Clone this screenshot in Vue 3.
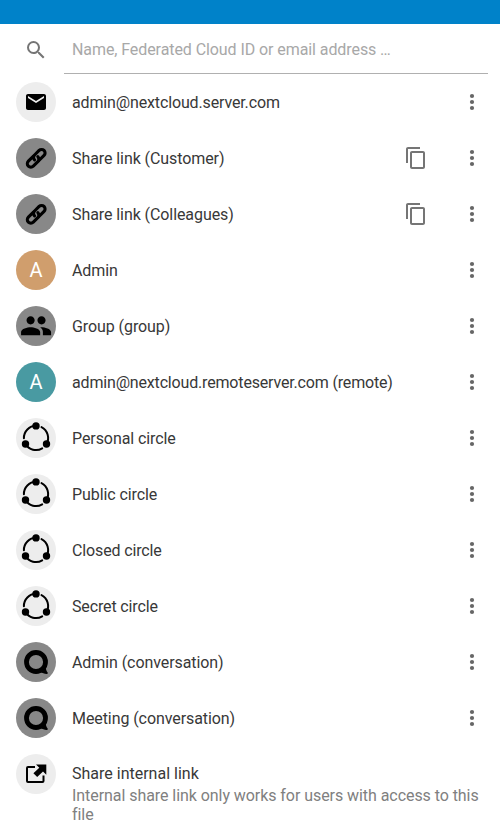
<script setup>
const rows = [
  { name: 'admin@nextcloud.server.com', icon: 'mail', tone: 'light', fit: 'tight' },
  { name: 'Share link (Customer)', icon: 'link', tone: 'grey', copy: true },
  { name: 'Share link (Colleagues)', icon: 'link', tone: 'grey', copy: true },
  { name: 'Admin', icon: 'letter', tone: 'tan' },
  { name: 'Group (group)', icon: 'group', tone: 'grey' },
  { name: 'admin@nextcloud.remoteserver.com (remote)', icon: 'letter', tone: 'teal', fit: 'tighter' },
  { name: 'Personal circle', icon: 'circle', tone: 'light' },
  { name: 'Public circle', icon: 'circle', tone: 'light' },
  { name: 'Closed circle', icon: 'circle', tone: 'light', fit: 'tight' },
  { name: 'Secret circle', icon: 'circle', tone: 'light', fit: 'tight' },
  { name: 'Admin (conversation)', icon: 'talk', tone: 'grey' },
  { name: 'Meeting (conversation)', icon: 'talk', tone: 'grey' },
  { name: 'Share internal link', icon: 'open', tone: 'light', fit: 'normal', note: 'Internal share link only works for users with access to this file' },
]
</script>

<template>
  <main class="screen">
    <div class="status-bar"></div>
    <div class="search">
      <svg class="search-icon" viewBox="0 0 24 24">
        <path d="M15.5 14h-.79l-.28-.27A6.47 6.47 0 0 0 16 9.500 6.500 6.500 0 1 0 9.500 16c1.610 0 3.090-.590 4.230-1.570l.270.280v.790l5 4.990L20.490 19l-4.990-5zm-6 0C7.010 14 5 11.990 5 9.500S7.010 5 9.500 5 14 7.010 14 9.500 11.990 14 9.500 14z" />
      </svg>
      <div class="field">Name, Federated Cloud ID or email address …</div>
    </div>
    <ul class="list">
      <li v-for="row in rows" :key="row.name" class="row" :class="{ tall: row.note }">
        <span class="avatar" :class="row.tone">
          <span v-if="row.icon === 'letter'">A</span>
          <svg v-else viewBox="0 0 40 40">
            <path v-if="row.icon === 'mail'" transform="translate(8 8)" d="M20 4H4c-1.100 0-1.990.900-1.990 2L2 18c0 1.100.900 2 2 2h16c1.100 0 2-.900 2-2V6c0-1.100-.900-2-2-2zm0 4l-8 5-8-5V6l8 5 8-5v2z" />
            <g v-else-if="row.icon === 'link'" class="stroke chain" transform="translate(20.200 20.300) rotate(-45)">
              <path d="M0 -3.500H-7.600A3.500 3.500 0 0 0 -7.600 3.500H-1.200A3.500 3.500 0 0 0 2.300 0" />
              <path d="M0 3.500H7.600A3.500 3.500 0 0 0 7.600 -3.500H1.200A3.500 3.500 0 0 0 -2.300 0" />
            </g>
            <path v-else-if="row.icon === 'group'" transform="translate(3.700 3.400) scale(1.364)" d="M16 11c1.660 0 2.990-1.340 2.990-3S17.660 5 16 5s-3 1.340-3 3 1.340 3 3 3zm-8 0c1.660 0 2.990-1.340 2.990-3S9.660 5 8 5 5 6.340 5 8s1.340 3 3 3zm0 2c-2.330 0-7 1.170-7 3.500V19h14v-2.500C15 14.170 10.330 13 8 13zm8 0c-.290 0-.620.020-.970.050 1.160.840 1.970 1.970 1.970 3.450V19h6v-2.500c0-2.330-4.670-3.500-7-3.500z" />
            <template v-else-if="row.icon === 'circle'">
              <g class="stroke ring">
                <path d="M7.900 20.200A12.200 12.200 0 0 1 20 7.800" />
                <path d="M25.500 9.100A12.200 12.200 0 0 1 30.500 26" />
                <path d="M9.500 26A12.200 12.200 0 0 0 26.200 30.400" />
              </g>
              <circle cx="20" cy="7.900" r="3.700" />
              <circle cx="9.500" cy="26" r="3.700" />
              <circle cx="30.500" cy="26" r="3.700" />
            </template>
            <template v-else-if="row.icon === 'talk'">
              <circle class="stroke bubble" cx="20" cy="20" r="9.500" />
              <path d="M29.500 24.500c.300 2.500.900 4.500 2 5.700.700.900.200 1.800-.900 1.700-2.200-.100-4.400-.800-6.100-1.900z" />
            </template>
            <template v-else>
              <path class="stroke box" d="M19 13H12Q11 13 11 14V27Q11 28 12 28H26.500Q27.500 28 27.500 27V21.500" />
              <path d="M20 10.500H30.300V20.800L27 17.600 21.200 23.100 17.400 19.300 23.300 13.700Z" />
            </template>
          </svg>
        </span>
        <div class="text">
          <div class="name" :class="row.fit">{{ row.name }}</div>
          <div v-if="row.note" class="note">{{ row.note }}</div>
        </div>
        <svg v-if="row.copy" class="copy" viewBox="0 0 24 24">
          <path d="M16 1H4c-1.100 0-2 .900-2 2v14h2V3h12V1zm3 4H8c-1.100 0-2 .900-2 2v14c0 1.100.900 2 2 2h11c1.100 0 2-.900 2-2V7c0-1.100-.900-2-2-2zm0 16H8V7h11v14z" />
        </svg>
        <svg v-if="!row.note" class="more" viewBox="0 0 24 24">
          <circle cx="12" cy="6" r="2.100" />
          <circle cx="12" cy="12" r="2.100" />
          <circle cx="12" cy="18" r="2.100" />
        </svg>
      </li>
    </ul>
  </main>
</template>

<style>
body {
  background: #fff;
}
</style>

<style scoped>
.screen {
  height: 833px;
  overflow: hidden;
  background: #fff;
  font-family: Roboto, "Noto Sans", sans-serif;
  font-size: 16px;
  color: #383838;
}
.status-bar {
  height: 24px;
  background: #0082c9;
}
.search {
  display: flex;
  height: 50px;
  padding: 0 12px 0 24px;
}
.search-icon {
  width: 24px;
  height: 24px;
  margin: 14px 16px 0 0;
  fill: #757575;
}
.field {
  flex: 1;
  box-sizing: border-box;
  padding-left: 8px;
  border-bottom: 1px solid #b0b0b0;
  line-height: 51px;
  letter-spacing: -0.08px;
  color: #a8a8a8;
}
.list {
  margin: 0;
  padding: 0;
  list-style: none;
}
.row {
  display: flex;
  align-items: center;
  height: 56px;
  padding: 0 16px;
}
.avatar {
  display: flex;
  align-items: center;
  justify-content: center;
  flex: none;
  width: 40px;
  height: 40px;
  margin-right: 16px;
  border-radius: 50%;
  font-size: 20px;
  color: #fff;
}
.avatar svg {
  width: 40px;
  height: 40px;
}
.light { background: #ededed; }
.grey { background: #888; }
.tan { background: #d09e6d; }
.teal { background: #499aa2; }
.stroke {
  fill: none;
  stroke: #000;
}
.chain {
  stroke-width: 3.1;
  stroke-linecap: round;
}
.ring {
  stroke-width: 2;
  stroke-linecap: round;
}
.bubble { stroke-width: 4.8; }
.box { stroke-width: 2; }
.text {
  flex: 1;
}
.name {
  padding-top: 2px;
  line-height: 20px;
  letter-spacing: -0.08px;
}
.tight { letter-spacing: -0.14px; }
.tighter { letter-spacing: -0.17px; }
.normal { letter-spacing: 0; }
.tall {
  align-items: flex-start;
  height: auto;
  padding-top: 8px;
}
.tall .text {
  padding-top: 8px;
}
.note {
  margin-top: 2px;
  line-height: 19px;
  letter-spacing: -0.06px;
  color: #808080;
}
.copy {
  width: 24px;
  height: 24px;
  margin-right: 32px;
  fill: #757575;
}
.more {
  width: 24px;
  height: 24px;
  fill: #666;
}
</style>
